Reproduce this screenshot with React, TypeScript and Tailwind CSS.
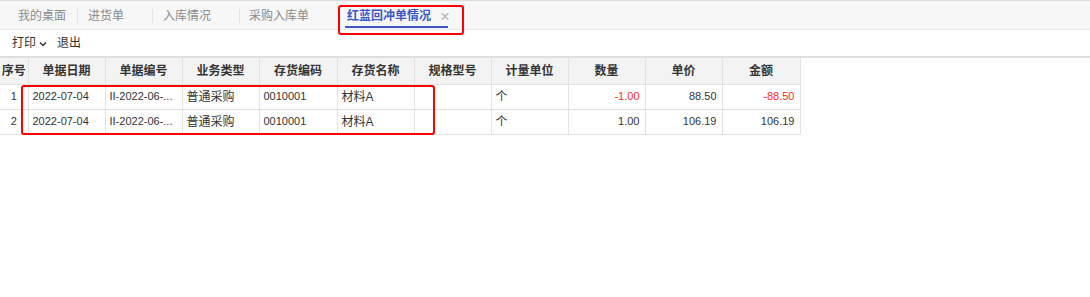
import React from 'react';

const cols = [
  { key: 'no', label: '序号', w: 28, align: 'text-center' },
  { key: 'date', label: '单据日期', w: 77, align: 'text-left' },
  { key: 'code', label: '单据编号', w: 77, align: 'text-left' },
  { key: 'type', label: '业务类型', w: 77, align: 'text-left' },
  { key: 'inv', label: '存货编码', w: 78, align: 'text-left' },
  { key: 'name', label: '存货名称', w: 77, align: 'text-left' },
  { key: 'spec', label: '规格型号', w: 77, align: 'text-left' },
  { key: 'unit', label: '计量单位', w: 77, align: 'text-left' },
  { key: 'qty', label: '数量', w: 77, align: 'text-right' },
  { key: 'price', label: '单价', w: 77, align: 'text-right' },
  { key: 'amount', label: '金额', w: 78, align: 'text-right' },
];

const cjkCols = ['type', 'name', 'unit'];

const rows = [
  { no: '1', date: '2022-07-04', code: 'II-2022-06-...', type: '普通采购', inv: '0010001', name: '材料A', spec: '', unit: '个', qty: '-1.00', price: '88.50', amount: '-88.50' },
  { no: '2', date: '2022-07-04', code: 'II-2022-06-...', type: '普通采购', inv: '0010001', name: '材料A', spec: '', unit: '个', qty: '1.00', price: '106.19', amount: '106.19' },
];

const tabs = [
  { label: '我的桌面', w: 78, pl: 18 },
  { label: '进货单', w: 75, pl: 10 },
  { label: '入库情况', w: 87, pl: 10 },
  { label: '采购入库单', w: 96, pl: 9 },
];

export default function App() {
  return (
    <div
      className="relative w-[1090px] h-[297px] bg-white text-[12px] text-[#333]"
      style={{ fontFamily: '"Liberation Sans", Arial, "Noto Sans CJK SC", sans-serif' }}
    >
      {/* tab bar */}
      <div className="flex h-[30px] bg-[#f7f7f7] border-t border-[#dcdcdc] border-b border-b-[#e6e6ef]">
        {tabs.map((t, i) => (
          <div
            key={t.label}
            className="flex items-center h-full pt-[2px] text-[#8a8a8a]"
            style={{ width: t.w, paddingLeft: t.pl }}
          >
            <span className="flex-1 leading-none">{t.label}</span>
            {i < tabs.length - 1 && <span className="w-px h-[14px] bg-[#e2e2e2]" />}
          </div>
        ))}
        <div className="relative flex items-center h-full pt-[2px] pl-[11px] w-[122px]">
          <span className="font-bold text-[#3d56c8] leading-none">红蓝回冲单情况</span>
          <span className="ml-[9px] text-[#b4b4b4] text-[17px] font-light leading-none">×</span>
          <span className="absolute left-[9px] right-[10px] top-[25px] h-[2px] bg-[#3d56c8]" />
        </div>
      </div>

      {/* toolbar */}
      <div className="flex items-center h-[28px] pl-[12px] border-b-2 border-[#dedede]">
        <span className="flex items-center">
          打印
          <svg width="8" height="6" viewBox="0 0 8 6" className="ml-[3px] mt-[1px]">
            <path d="M1 1.5 L4 4.5 L7 1.5" fill="none" stroke="#333" strokeWidth="1.4" />
          </svg>
        </span>
        <span className="ml-[10px]">退出</span>
      </div>

      {/* grid */}
      <table className="border-collapse table-fixed w-[800px]">
        <thead>
          <tr className="h-[26px] bg-[#f3f3f3]">
            {cols.map((c) => (
              <th
                key={c.key}
                className="border border-[#e2e2e2] border-t-0 first:border-l-0 font-bold text-[#333] text-center p-0"
                style={{ width: c.w }}
              >
                {c.label}
              </th>
            ))}
          </tr>
        </thead>
        <tbody>
          {rows.map((r) => (
            <tr key={r.no} className="h-[25px]">
              {cols.map((c) => {
                const v = (r as Record<string, string>)[c.key];
                const red = v.startsWith('-');
                const pad = c.align === 'text-right' ? 'pr-[5px]' : c.align === 'text-left' ? 'pl-[4px]' : '';
                return (
                  <td
                    key={c.key}
                    className={`border border-[#e2e2e2] first:border-l-0 p-0 ${pad} ${c.align} ${cjkCols.includes(c.key) ? 'text-[12px]' : 'text-[11px]'} ${red ? 'text-[#ff2a2a]' : 'text-[#333]'} whitespace-nowrap overflow-hidden`}
                  >
                    {v}
                  </td>
                );
              })}
            </tr>
          ))}
        </tbody>
      </table>

      {/* red annotation boxes */}
      <div className="absolute left-[338px] top-[5px] w-[126px] h-[30px] border-2 border-[#ff0000] rounded-[3px]" />
      <div className="absolute left-[21px] top-[85px] w-[414px] h-[50px] border-2 border-[#ff0000] rounded-[3px]" />
    </div>
  );
}
